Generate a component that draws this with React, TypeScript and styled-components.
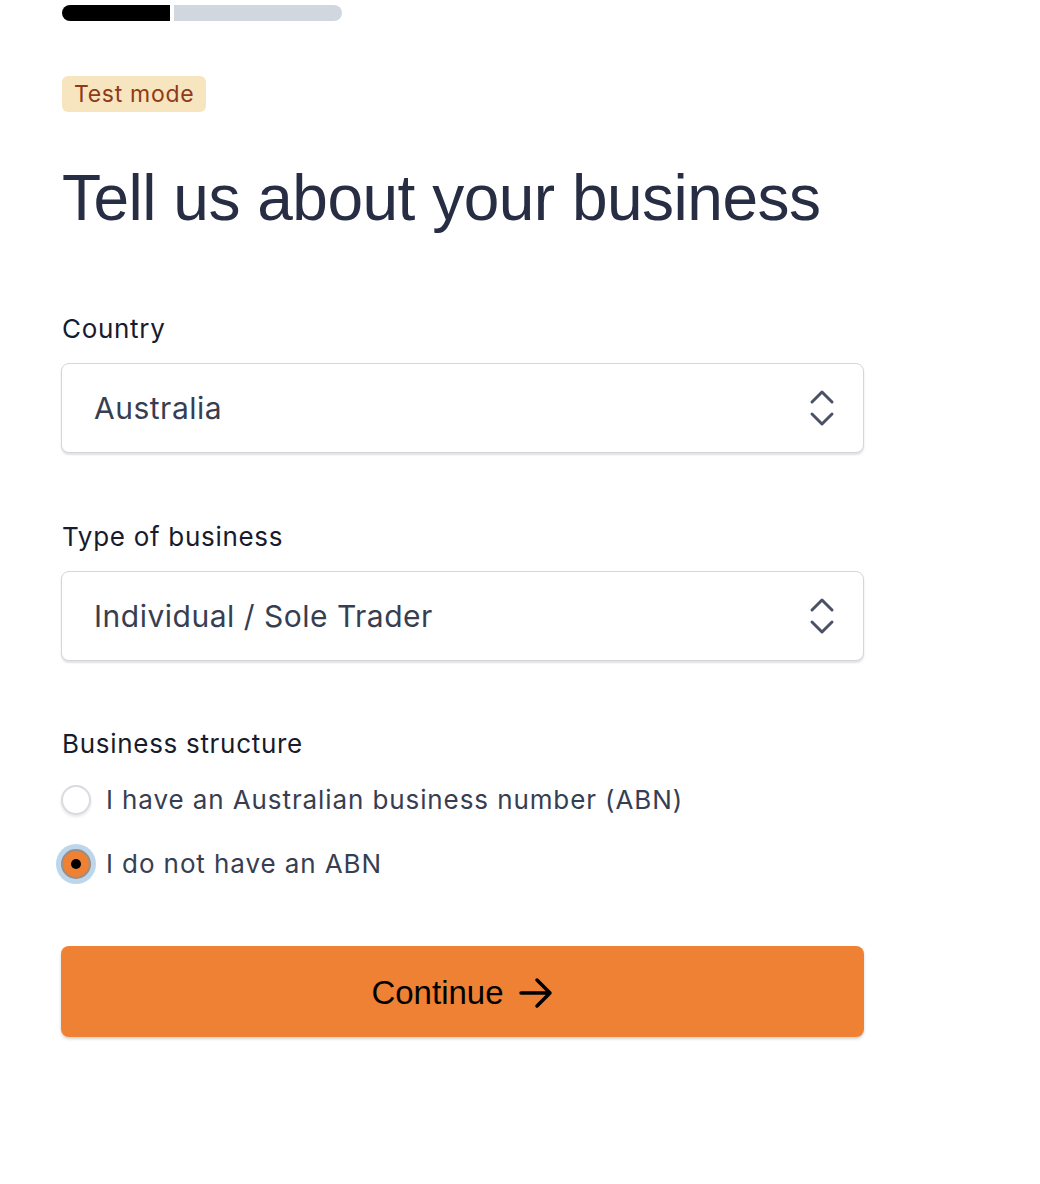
import React, { useState } from 'react'
import styled, { createGlobalStyle } from 'styled-components'

const GlobalStyle = createGlobalStyle`
  * { box-sizing: border-box; }
  body {
    margin: 0;
    background: #ffffff;
    font-family: Inter, "Noto Sans", sans-serif;
  }
`

const Page = styled.div`
  padding: 5px 0 0 61px;
  min-height: 100vh;
`

const Form = styled.div`
  width: 803px;
  display: flex;
  flex-direction: column;
`

const Progress = styled.div`
  margin-left: 1px;
  width: 280px;
  height: 16px;
  display: flex;
  gap: 4px;
  border-radius: 8px;
  overflow: hidden;
`

const Segment = styled.div<{ $done?: boolean; $grow: number }>`
  flex: ${p => p.$grow};
  background: ${p => (p.$done ? '#000000' : '#d1d7df')};
`

const Badge = styled.span`
  align-self: flex-start;
  margin: 55px 0 0 1px;
  height: 36px;
  padding: 0 12px;
  display: inline-flex;
  align-items: center;
  background: #f6e5bf;
  color: #8f3a18;
  border-radius: 6px;
  font-size: 23px;
  letter-spacing: 0.7px;
`

const Title = styled.h1`
  margin: 48px 0 0 1px;
  font-family: "Liberation Sans", Arial, sans-serif;
  font-weight: 400;
  font-size: 64px;
  line-height: 1.2;
  color: #272d42;
  letter-spacing: -0.5px;
`

const Label = styled.div<{ $top: number }>`
  margin: ${p => p.$top}px 0 0 1px;
  font-size: 26px;
  line-height: 36px;
  color: #171b2c;
  letter-spacing: 0.7px;
`

const SelectBox = styled.div`
  margin-top: 16px;
  height: 90px;
  padding: 0 28px 0 32px;
  display: flex;
  align-items: center;
  justify-content: space-between;
  border: 1.5px solid #d4d6dc;
  border-radius: 8px;
  box-shadow: 0 2px 2px rgba(0, 0, 0, 0.12);
  font-size: 30px;
  color: #373e52;
  background: #fff;
  letter-spacing: 0.5px;
`

const RadioList = styled.div`
  margin-top: 21px;
  display: flex;
  flex-direction: column;
  gap: 30px;
`

const RadioRow = styled.label`
  display: flex;
  align-items: center;
  gap: 15px;
  font-size: 26px;
  line-height: 34px;
  color: #373e52;
  cursor: pointer;
  letter-spacing: 0.9px;
`

const RadioDot = styled.span<{ $checked?: boolean }>`
  width: 30px;
  height: 30px;
  border-radius: 50%;
  display: inline-flex;
  align-items: center;
  justify-content: center;
  flex-shrink: 0;
  background: ${p => (p.$checked ? '#ee8133' : '#ffffff')};
  border: 2px solid ${p => (p.$checked ? '#9a8e86' : '#d9dbe0')};
  box-shadow: ${p =>
    p.$checked ? '0 0 0 5px #bcd6ec' : '0 2px 3px rgba(0, 0, 0, 0.1)'};

  &::after {
    content: '';
    width: 10px;
    height: 10px;
    border-radius: 50%;
    background: #000;
    display: ${p => (p.$checked ? 'block' : 'none')};
  }
`

const Button = styled.button`
  margin-top: 65px;
  height: 91px;
  border: none;
  border-radius: 8px;
  background: #ee8133;
  box-shadow: 0 2px 3px rgba(0, 0, 0, 0.18);
  display: flex;
  align-items: center;
  justify-content: center;
  gap: 14px;
  padding-top: 4px;
  font-family: "Liberation Sans", Arial, sans-serif;
  font-size: 33px;
  color: #000;
  cursor: pointer;
`

const Chevrons = () => (
  <svg width="26" height="38" viewBox="0 0 26 38" fill="none">
    <path d="M3 13 L13 3 L23 13" stroke="#4a5265" strokeWidth="3" strokeLinecap="round" strokeLinejoin="round" />
    <path d="M3 25 L13 35 L23 25" stroke="#4a5265" strokeWidth="3" strokeLinecap="round" strokeLinejoin="round" />
  </svg>
)

const Arrow = () => (
  <svg width="36" height="32" viewBox="0 0 36 32" fill="none">
    <path d="M3 16 H32 M19 3 L32 16 L19 29" stroke="#000" strokeWidth="3.5" strokeLinecap="round" strokeLinejoin="round" />
  </svg>
)

export default function App() {
  const [hasAbn, setHasAbn] = useState(false)

  return (
    <>
      <GlobalStyle />
      <Page>
        <Form>
          <Progress>
            <Segment $done $grow={108} />
            <Segment $grow={168} />
          </Progress>

          <Badge>Test mode</Badge>

          <Title>Tell us about your business</Title>

          <Label $top={74}>Country</Label>
          <SelectBox>
            <span>Australia</span>
            <Chevrons />
          </SelectBox>

          <Label $top={66}>Type of business</Label>
          <SelectBox>
            <span>Individual / Sole Trader</span>
            <Chevrons />
          </SelectBox>

          <Label $top={65}>Business structure</Label>
          <RadioList>
            <RadioRow onClick={() => setHasAbn(true)}>
              <RadioDot $checked={hasAbn} />
              I have an Australian business number (ABN)
            </RadioRow>
            <RadioRow onClick={() => setHasAbn(false)}>
              <RadioDot $checked={!hasAbn} />
              I do not have an ABN
            </RadioRow>
          </RadioList>

          <Button>
            Continue <Arrow />
          </Button>
        </Form>
      </Page>
    </>
  )
}
